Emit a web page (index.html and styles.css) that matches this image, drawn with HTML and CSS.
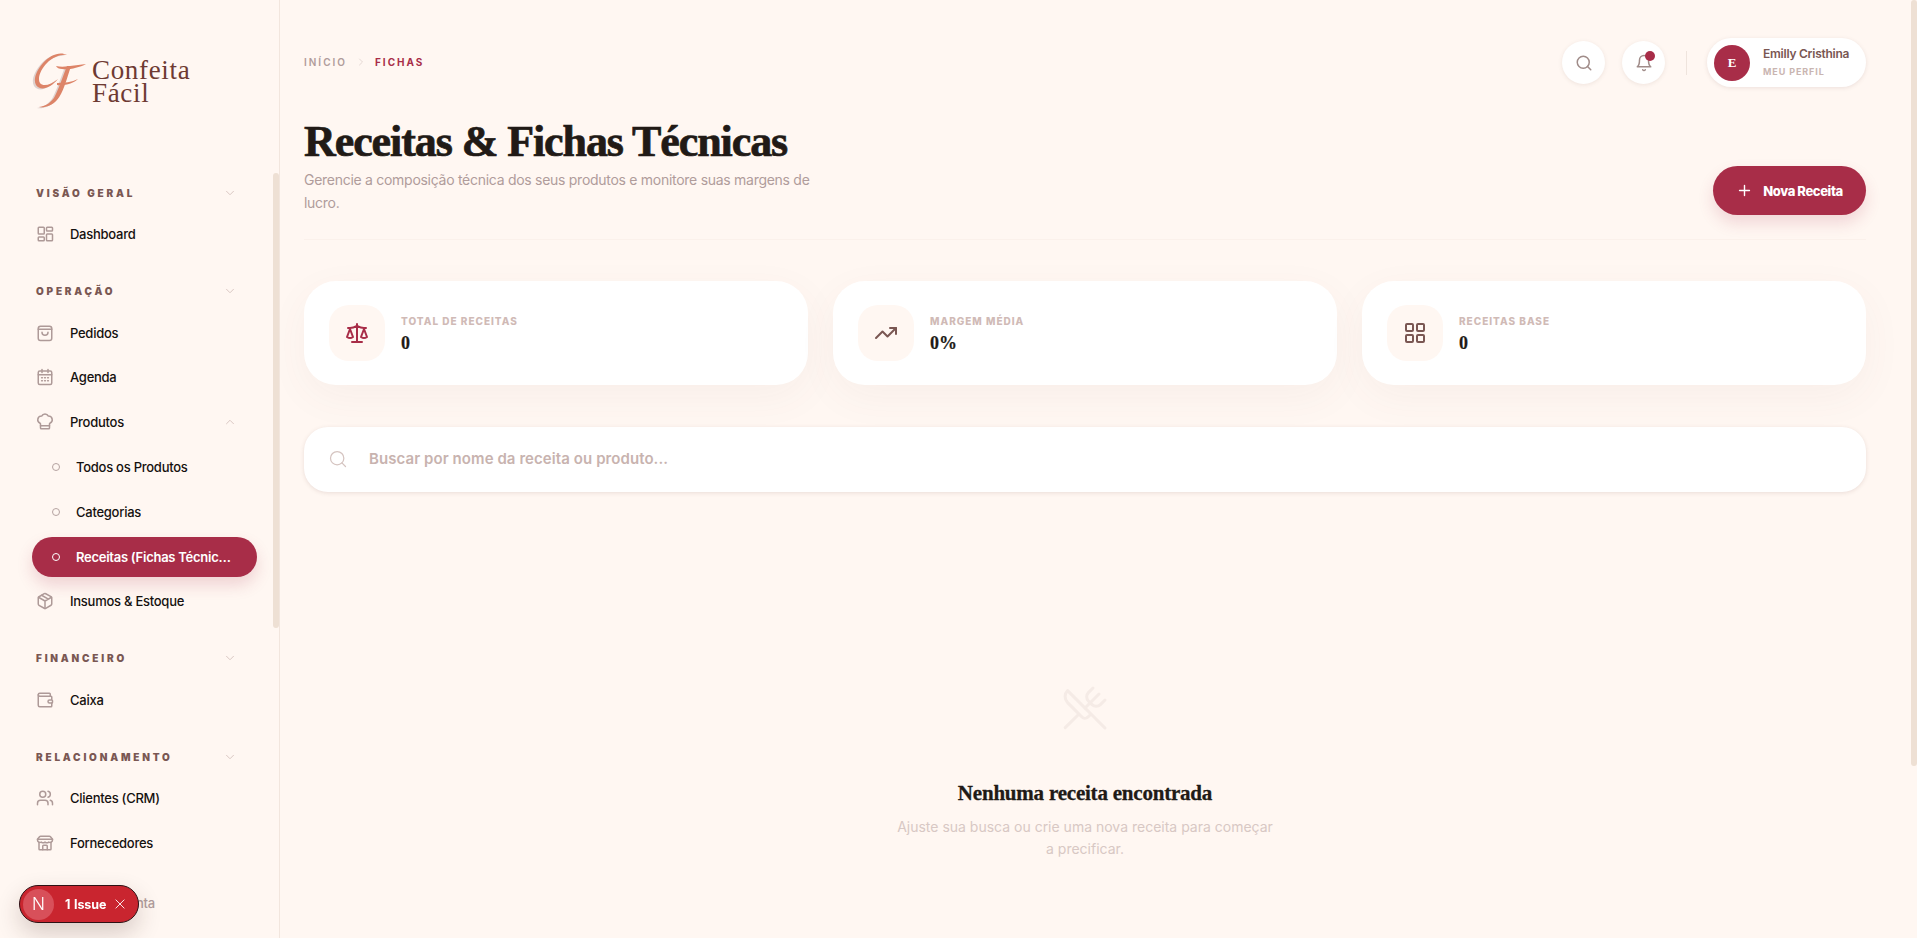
FILE: index.html
```html
<!DOCTYPE html>
<html lang="pt-BR">
<head>
  <meta charset="UTF-8" />
  <meta name="viewport" content="width=device-width, initial-scale=1.0"/>
  <title>Receitas &amp; Fichas Técnicas</title>
  <link rel="stylesheet" href="styles.css">
</head>

<body>
  <svg class="icon-defs" width="0" height="0">
    <symbol id="i-chevron" viewBox="0 0 24 24"><path d="m6 9 6 6 6-6"/></symbol>
    <symbol id="i-search" viewBox="0 0 24 24"><circle cx="11" cy="11" r="8"/><path d="m21 21-4.3-4.3"/></symbol>
  </svg>

  <aside class="sidebar">
    <div class="logo">
      <svg class="logo-mark" viewBox="0 0 54 58">
        <path class="mark-shade" d="M33 4C26 0 16 4 9 12 2 20-1 29 2 34c4 6 14 4 22-6-7 6-15 8-18 4-3-5 1-14 7-20C19 6 27 3 33 4Z"/>
        <path class="mark-main" d="M35 3C28-1 18 3 11 11 4 19 1 28 4 33c4 6 14 4 22-6-7 6-15 8-18 4-3-5 1-14 7-20C21 5 29 2 35 3Z"/>
        <path class="mark-shade" d="M37 15c-4 12-8 28-14 34-5 6-13 8-18 7 7-1 13-5 16-11 4-8 8-20 12-30Z"/>
        <path class="mark-main" d="M39 14c-4 12-8 28-14 34-5 6-13 8-18 7 7-1 13-5 16-11 4-8 8-20 12-30Z"/>
        <path class="mark-main" d="M24 14c8 2 20-1 30-2-7 4-18 6-24 5-3 0-5-1-6-3Z"/>
        <path class="mark-main" d="M25 31c7 0 15-1 21-4-4 4-13 7-21 6Z"/>
      </svg>
      <div class="logo-text">Confeita<br>Fácil</div>
    </div>

    <nav class="nav">
      <section class="nav-group">
        <header class="nav-title"><span>VISÃO GERAL</span><svg class="chevron"><use href="#i-chevron"/></svg></header>
        <a class="nav-item">
          <svg class="nav-icon" viewBox="0 0 24 24"><rect x="3" y="3" width="8" height="9" rx="1"/><rect x="14" y="3" width="8" height="5" rx="1"/><rect x="14" y="12" width="8" height="9" rx="1"/><rect x="3" y="16" width="8" height="5" rx="1"/></svg>
          Dashboard
        </a>
      </section>

      <section class="nav-group">
        <header class="nav-title"><span>OPERAÇÃO</span><svg class="chevron"><use href="#i-chevron"/></svg></header>
        <a class="nav-item">
          <svg class="nav-icon" viewBox="0 0 24 24"><path d="M3 6a3 3 0 0 1 3-3h12a3 3 0 0 1 3 3v13a3 3 0 0 1-3 3H6a3 3 0 0 1-3-3z"/><path d="M3 7h18"/><path d="M8 11a4 4 0 0 0 8 0"/></svg>
          Pedidos
        </a>
        <a class="nav-item">
          <svg class="nav-icon" viewBox="0 0 24 24"><rect x="3" y="4" width="18" height="18" rx="2"/><path d="M8 2v4M16 2v4M3 9h18M7.500 13h1M11.500 13h1M15.500 13h1M7.500 17h1M11.500 17h1M15.500 17h1"/></svg>
          Agenda
        </a>
        <a class="nav-item">
          <svg class="nav-icon" viewBox="0 0 24 24"><path d="M17 21a1 1 0 0 0 1-1v-5.400a1 1 0 0 1 .6-.9 5 5 0 0 0-2.100-9.600 5 5 0 0 0-9 0 5 5 0 0 0-2.100 9.600 1 1 0 0 1 .6.9V20a1 1 0 0 0 1 1z"/><path d="M6 17h12"/></svg>
          Produtos
          <svg class="chevron chevron-up"><use href="#i-chevron"/></svg>
        </a>
        <a class="nav-item sub-item"><span class="dot"></span><span class="sub-label">Todos os Produtos</span></a>
        <a class="nav-item sub-item"><span class="dot"></span><span class="sub-label">Categorias</span></a>
        <a class="nav-item sub-item active"><span class="dot"></span><span class="sub-label">Receitas (Fichas Técnicas)</span></a>
        <a class="nav-item">
          <svg class="nav-icon" viewBox="0 0 24 24"><path d="M11 21.700a2 2 0 0 0 2 0l7-4A2 2 0 0 0 21 16V8a2 2 0 0 0-1-1.700l-7-4a2 2 0 0 0-2 0l-7 4A2 2 0 0 0 3 8v8a2 2 0 0 0 1 1.700z"/><path d="M12 22V12M3.300 7 12 12l8.700-5M7.500 4.300l9 5.100"/></svg>
          Insumos &amp; Estoque
        </a>
      </section>

      <section class="nav-group">
        <header class="nav-title"><span>FINANCEIRO</span><svg class="chevron"><use href="#i-chevron"/></svg></header>
        <a class="nav-item">
          <svg class="nav-icon" viewBox="0 0 24 24"><path d="M19 7V4a1 1 0 0 0-1-1H5a2 2 0 0 0 0 4h15a1 1 0 0 1 1 1v4h-3a2 2 0 0 0 0 4h3a1 1 0 0 0 1-1v-2a1 1 0 0 0-1-1"/><path d="M3 5v14a2 2 0 0 0 2 2h15a1 1 0 0 0 1-1v-4"/></svg>
          Caixa
        </a>
      </section>

      <section class="nav-group">
        <header class="nav-title"><span>RELACIONAMENTO</span><svg class="chevron"><use href="#i-chevron"/></svg></header>
        <a class="nav-item">
          <svg class="nav-icon" viewBox="0 0 24 24"><path d="M16 21v-2a4 4 0 0 0-4-4H6a4 4 0 0 0-4 4v2"/><circle cx="9" cy="7" r="4"/><path d="M22 21v-2a4 4 0 0 0-3-3.900M16 3.100a4 4 0 0 1 0 7.800"/></svg>
          Clientes (CRM)
        </a>
        <a class="nav-item">
          <svg class="nav-icon" viewBox="0 0 24 24"><path d="M2 7l2.700-3.300A2 2 0 0 1 6.200 3h11.600a2 2 0 0 1 1.500.7L22 7"/><path d="M2 7h20v1a3.300 3.300 0 0 1-5 2.800 4 4 0 0 1-5 0 4 4 0 0 1-5 0A3.300 3.300 0 0 1 2 8z"/><path d="M4 11v9a1 1 0 0 0 1 1h14a1 1 0 0 0 1-1v-9"/><path d="M9 21v-5a1 1 0 0 1 1-1h4a1 1 0 0 1 1 1v5"/></svg>
          Fornecedores
        </a>
        <a class="nav-item nav-muted">Minha Conta</a>
      </section>
    </nav>

    <div class="side-thumb"></div>
  </aside>

  <main class="main">
    <div class="topbar">
      <div class="crumbs">
        <span>INÍCIO</span>
        <svg class="crumb-sep" viewBox="0 0 24 24"><path d="m9 18 6-6-6-6"/></svg>
        <span class="crumb-now">FICHAS</span>
      </div>
      <div class="top-actions">
        <button class="round-btn"><svg class="round-icon"><use href="#i-search"/></svg></button>
        <button class="round-btn bell">
          <svg class="round-icon" viewBox="0 0 24 24"><path d="M6 8a6 6 0 0 1 12 0c0 7 3 9 3 9H3s3-2 3-9"/><path d="M10.300 21a1.900 1.900 0 0 0 3.400 0"/></svg>
          <span class="bell-dot"></span>
        </button>
        <span class="top-divider"></span>
        <div class="profile">
          <span class="avatar">E</span>
          <div class="profile-text">
            <div class="profile-name">Emilly Cristhina</div>
            <div class="profile-link">MEU PERFIL</div>
          </div>
        </div>
      </div>
    </div>

    <div class="page-head">
      <div class="page-intro">
        <h1>Receitas &amp; Fichas Técnicas</h1>
        <p>Gerencie a composição técnica dos seus produtos e monitore suas margens de lucro.</p>
      </div>
      <button class="primary-btn">
        <svg class="plus" viewBox="0 0 24 24"><path d="M5 12h14M12 5v14"/></svg>
        Nova Receita
      </button>
    </div>

    <div class="stats">
      <div class="stat">
        <div class="stat-icon accent">
          <svg viewBox="0 0 24 24"><path d="m16 16 3-8 3 8c-.9.6-1.900 1-3 1s-2.100-.4-3-1z"/><path d="m2 16 3-8 3 8c-.9.6-1.900 1-3 1s-2.100-.4-3-1z"/><path d="M7 21h10M12 3v18M3 7h2c2 0 5-1 7-2 2 1 5 2 7 2h2"/></svg>
        </div>
        <div class="stat-text"><div class="stat-label">TOTAL DE RECEITAS</div><div class="stat-value">0</div></div>
      </div>
      <div class="stat">
        <div class="stat-icon">
          <svg viewBox="0 0 24 24"><path d="m22 7-8.500 8.500-5-5L2 17"/><path d="M16 7h6v6"/></svg>
        </div>
        <div class="stat-text"><div class="stat-label">MARGEM MÉDIA</div><div class="stat-value">0%</div></div>
      </div>
      <div class="stat">
        <div class="stat-icon">
          <svg viewBox="0 0 24 24"><rect x="3" y="3" width="7" height="7" rx="1"/><rect x="14" y="3" width="7" height="7" rx="1"/><rect x="14" y="14" width="7" height="7" rx="1"/><rect x="3" y="14" width="7" height="7" rx="1"/></svg>
        </div>
        <div class="stat-text"><div class="stat-label">RECEITAS BASE</div><div class="stat-value">0</div></div>
      </div>
    </div>

    <div class="search">
      <svg class="search-icon"><use href="#i-search"/></svg>
      <span>Buscar por nome da receita ou produto...</span>
    </div>

    <div class="empty">
      <svg class="empty-icon" viewBox="0 0 24 24"><path d="m16 2-2.300 2.300a3 3 0 0 0 0 4.200l1.800 1.800a3 3 0 0 0 4.200 0L22 8"/><path d="M15 15 3.300 3.300a4.200 4.200 0 0 0 0 6l7.300 7.300c.7.700 2 .7 2.800 0L15 15Zm0 0 7 7"/><path d="m2.100 21.800 6.400-6.300"/><path d="m19 5-7 7"/></svg>
      <h2>Nenhuma receita encontrada</h2>
      <p>Ajuste sua busca ou crie uma nova receita para começar a precificar.</p>
    </div>
  </main>

  <div class="page-thumb"></div>

  <div class="dev-badge">
    <span class="dev-n">N</span>
    <span class="dev-text">1 Issue</span>
    <svg class="dev-x" viewBox="0 0 24 24"><path d="M5 5l14 14M19 5 5 19"/></svg>
  </div>
</body>
</html>
```

FILE: styles.css
```css
:root {
  --bg: #fff7f2;
  --wine: #a82d48;
  --brown: #7a5753;
  --ink: #211a16;
  --muted: #b09c9b;
  --faint: #d0bab6;
  --line: #f2e6de;
  --thumb: #eee0d4;
}
* {
  box-sizing: border-box;
}
html, body {
  height: 100%;
}
body {
  margin: 0;
  height: 938px;
  overflow: hidden;
  display: flex;
  background-color: var(--bg);
  font-family: Inter, "Liberation Sans", sans-serif;
  color: var(--ink);
}
.icon-defs {
  position: absolute;
}
svg {
  fill: none;
  stroke: currentColor;
  stroke-width: 2;
  stroke-linecap: round;
  stroke-linejoin: round;
}

/* sidebar */
.sidebar {
  position: relative;
  flex: 0 0 280px;
  height: 938px;
  overflow: hidden;
  border-right: 1px solid var(--line);
  padding: 52px 0 0 32px;
}
.logo {
  display: flex;
  align-items: center;
  gap: 6px;
  height: 58px;
}
.logo-mark {
  flex: 0 0 54px;
  width: 54px;
  height: 58px;
  stroke: none;
}
.mark-main {
  fill: #dd8468;
}
.mark-shade {
  fill: #dfd2cf;
}
.logo-text {
  padding-top: 1px;
  font-family: "Liberation Serif", serif;
  font-size: 27px;
  line-height: 23px;
  letter-spacing: 0.025em;
  color: #6e3a32;
}
.nav {
  margin-top: 74px;
  width: 225px;
  display: flex;
  flex-direction: column;
  gap: 28px;
}
.nav-group {
  display: flex;
  flex-direction: column;
  gap: 4.800px;
}
.nav-title {
  display: flex;
  align-items: center;
  justify-content: space-between;
  height: 18px;
  padding: 0 20px 0 4px;
  margin-bottom: 7.500px;
  font-size: 10px;
  font-weight: 900;
  letter-spacing: 0.28em;
  color: var(--brown);
}
.chevron {
  width: 14px;
  height: 14px;
  color: #d3c0bc;
  stroke-width: 1.500;
}
.chevron-up {
  transform: rotate(180deg);
  margin-left: auto;
  margin-right: 20px;
}
.nav-item {
  display: flex;
  align-items: center;
  height: 40px;
  padding-left: 4px;
  border-radius: 20px;
  font-size: 13px;
  font-weight: 500;
  letter-spacing: -0.02em;
  color: #15110f;
  white-space: nowrap;
}
.nav-icon {
  flex: 0 0 18px;
  width: 18px;
  height: 18px;
  margin-right: 16px;
  color: #ae9a98;
}
.nav-muted {
  margin-top: 15px;
  padding-left: 47px;
  color: var(--muted);
}
.sub-item {
  padding-left: 20px;
}
.dot {
  flex: 0 0 8px;
  width: 8px;
  height: 8px;
  border-radius: 50%;
  border: 1px solid #b5a3a1;
  margin-right: 16px;
}
.sub-label {
  min-width: 0;
  overflow: hidden;
  text-overflow: ellipsis;
}
.active {
  background-color: var(--wine);
  color: #fff;
  font-weight: 600;
  padding-right: 24px;
  box-shadow: 0 8px 16px rgba(168, 45, 72, 0.18);
}
.active .dot {
  border-color: #fff;
}
.side-thumb {
  position: absolute;
  top: 173px;
  right: 0;
  width: 6px;
  height: 455px;
  border-radius: 3px;
  background-color: var(--thumb);
}

/* main */
.main {
  flex: 1;
  min-width: 0;
  padding: 38px 51px 0 24px;
}
.topbar {
  display: flex;
  align-items: center;
  justify-content: space-between;
  height: 49px;
}
.crumbs {
  display: flex;
  align-items: center;
  gap: 8px;
  padding-bottom: 1px;
  font-size: 10px;
  font-weight: 600;
  letter-spacing: 0.2em;
  color: var(--muted);
}
.crumb-sep {
  width: 12px;
  height: 12px;
  color: #dccdc9;
  stroke-width: 1.500;
}
.crumb-now {
  font-weight: 700;
  color: var(--wine);
}
.top-actions {
  display: flex;
  align-items: center;
}
.round-btn {
  position: relative;
  display: flex;
  align-items: center;
  justify-content: center;
  width: 43px;
  height: 43px;
  margin-right: 17px;
  padding: 0;
  border: 0;
  border-radius: 50%;
  background-color: #fff;
  box-shadow: 0 1px 4px rgba(122, 87, 83, 0.12);
  color: #a08c89;
}
.round-icon {
  width: 18px;
  height: 18px;
}
.bell-dot {
  position: absolute;
  top: 10px;
  right: 10px;
  width: 10px;
  height: 10px;
  border-radius: 50%;
  background-color: var(--wine);
}
.top-divider {
  width: 1px;
  height: 24px;
  margin: 0 20px 0 4px;
  background-color: #efe4dd;
}
.profile {
  display: flex;
  align-items: center;
  gap: 13px;
  width: 159px;
  height: 49px;
  padding-left: 7px;
  border-radius: 25px;
  background-color: #fff;
  box-shadow: 0 1px 4px rgba(122, 87, 83, 0.14);
}
.avatar {
  display: flex;
  align-items: center;
  justify-content: center;
  width: 36px;
  height: 36px;
  border-radius: 50%;
  background-color: var(--wine);
  color: #fff;
  font-family: "Liberation Serif", serif;
  font-size: 13px;
  font-weight: 700;
}
.profile-name {
  margin-top: -1px;
  font-size: 12px;
  font-weight: 600;
  line-height: 16px;
  letter-spacing: -0.02em;
  color: var(--brown);
  white-space: nowrap;
}
.profile-link {
  margin-top: 4px;
  font-size: 9px;
  font-weight: 700;
  line-height: 12px;
  letter-spacing: 0.1em;
  color: #c9b5b1;
}
.page-head {
  display: flex;
  align-items: flex-end;
  justify-content: space-between;
  height: 153px;
  padding-bottom: 24px;
  border-bottom: 1px solid #fbf1eb;
}
.page-intro {
  width: 520px;
  padding-bottom: 1px;
}
h1 {
  margin: 0;
  font-family: "Liberation Serif", serif;
  font-size: 44px;
  font-weight: 700;
  line-height: 50px;
  letter-spacing: -1.080px;
  white-space: nowrap;
  color: var(--ink);
  -webkit-text-stroke: 0.7px var(--ink);
}
.page-intro p {
  margin: 1px 0 0;
  font-size: 14px;
  line-height: 23px;
  letter-spacing: -0.02em;
  color: var(--muted);
}
.primary-btn {
  display: flex;
  align-items: center;
  justify-content: center;
  gap: 10px;
  width: 153px;
  height: 49px;
  border: 0;
  border-radius: 25px;
  background-color: var(--wine);
  box-shadow: 0 8px 16px rgba(168, 45, 72, 0.16);
  color: #fff;
  font-family: inherit;
  font-size: 13px;
  font-weight: 800;
  letter-spacing: -0.03em;
}
.plus {
  width: 17px;
  height: 17px;
}
.stats {
  display: grid;
  grid-template-columns: repeat(3, 1fr);
  gap: 25px;
  margin-top: 41px;
}
.stat {
  display: flex;
  align-items: center;
  gap: 16px;
  height: 104px;
  padding-left: 25px;
  border-radius: 32px;
  background-color: #fff;
  box-shadow: 0 12px 40px rgba(122, 87, 83, 0.05);
}
.stat-icon {
  display: flex;
  align-items: center;
  justify-content: center;
  width: 56px;
  height: 56px;
  border-radius: 20px;
  background-color: var(--bg);
  color: var(--brown);
}
.stat-icon svg {
  width: 24px;
  height: 24px;
}
.accent {
  color: var(--wine);
}
.stat-text {
  padding-top: 3px;
}
.stat-label {
  font-size: 10px;
  font-weight: 800;
  line-height: 14px;
  letter-spacing: 0.1em;
  color: var(--faint);
}
.stat-value {
  margin-top: 3px;
  font-family: "Liberation Serif", serif;
  font-size: 18px;
  font-weight: 700;
  line-height: 24px;
  color: var(--ink);
  -webkit-text-stroke: 0.2px var(--ink);
}
.search {
  display: flex;
  align-items: center;
  height: 65px;
  margin-top: 42px;
  padding: 0 0 2px 24px;
  border-radius: 24px;
  background-color: #fff;
  box-shadow: 0 1px 4px rgba(122, 87, 83, 0.16);
  font-size: 15px;
  font-weight: 600;
  letter-spacing: 0.005em;
  color: #c8b3af;
}
.search-icon {
  width: 20px;
  height: 20px;
  margin-right: 21px;
  color: #d5c4c0;
  stroke-width: 1.500;
}
.empty {
  display: flex;
  flex-direction: column;
  align-items: center;
  margin-top: 192px;
}
.empty-icon {
  width: 48px;
  height: 48px;
  color: #f5ebe6;
  stroke-width: 1.500;
}
h2 {
  margin: 46px 0 0;
  font-family: "Liberation Serif", serif;
  font-size: 21px;
  font-weight: 700;
  line-height: 30px;
  letter-spacing: -0.01em;
  color: var(--ink);
  -webkit-text-stroke: 0.3px var(--ink);
}
.empty p {
  width: 384px;
  margin: 8px 0 0;
  text-align: center;
  font-size: 14px;
  line-height: 22px;
  color: #d8c8c4;
}
.page-thumb {
  position: fixed;
  top: 0;
  right: 0;
  width: 6px;
  height: 766px;
  border-radius: 3px;
  background-color: var(--thumb);
}

/* next.js dev badge */
.dev-badge {
  position: fixed;
  left: 19px;
  top: 885px;
  display: flex;
  align-items: center;
  width: 120px;
  height: 38px;
  padding-left: 3px;
  border: 1px solid #2d1114;
  border-radius: 19px;
  background-color: #c9252f;
  box-shadow: 0 10px 24px rgba(60, 30, 20, 0.2);
  color: #fff;
}
.dev-n {
  display: flex;
  align-items: center;
  justify-content: center;
  width: 31px;
  height: 31px;
  border-radius: 50%;
  background-color: #d8505a;
  font-size: 17px;
  font-weight: 300;
}
.dev-text {
  margin-left: 11px;
  font-size: 12.500px;
  font-weight: 700;
  letter-spacing: -0.01em;
  word-spacing: 1px;
}
.dev-x {
  width: 14px;
  height: 14px;
  margin-left: 7px;
  stroke-width: 1.500;
}
```
